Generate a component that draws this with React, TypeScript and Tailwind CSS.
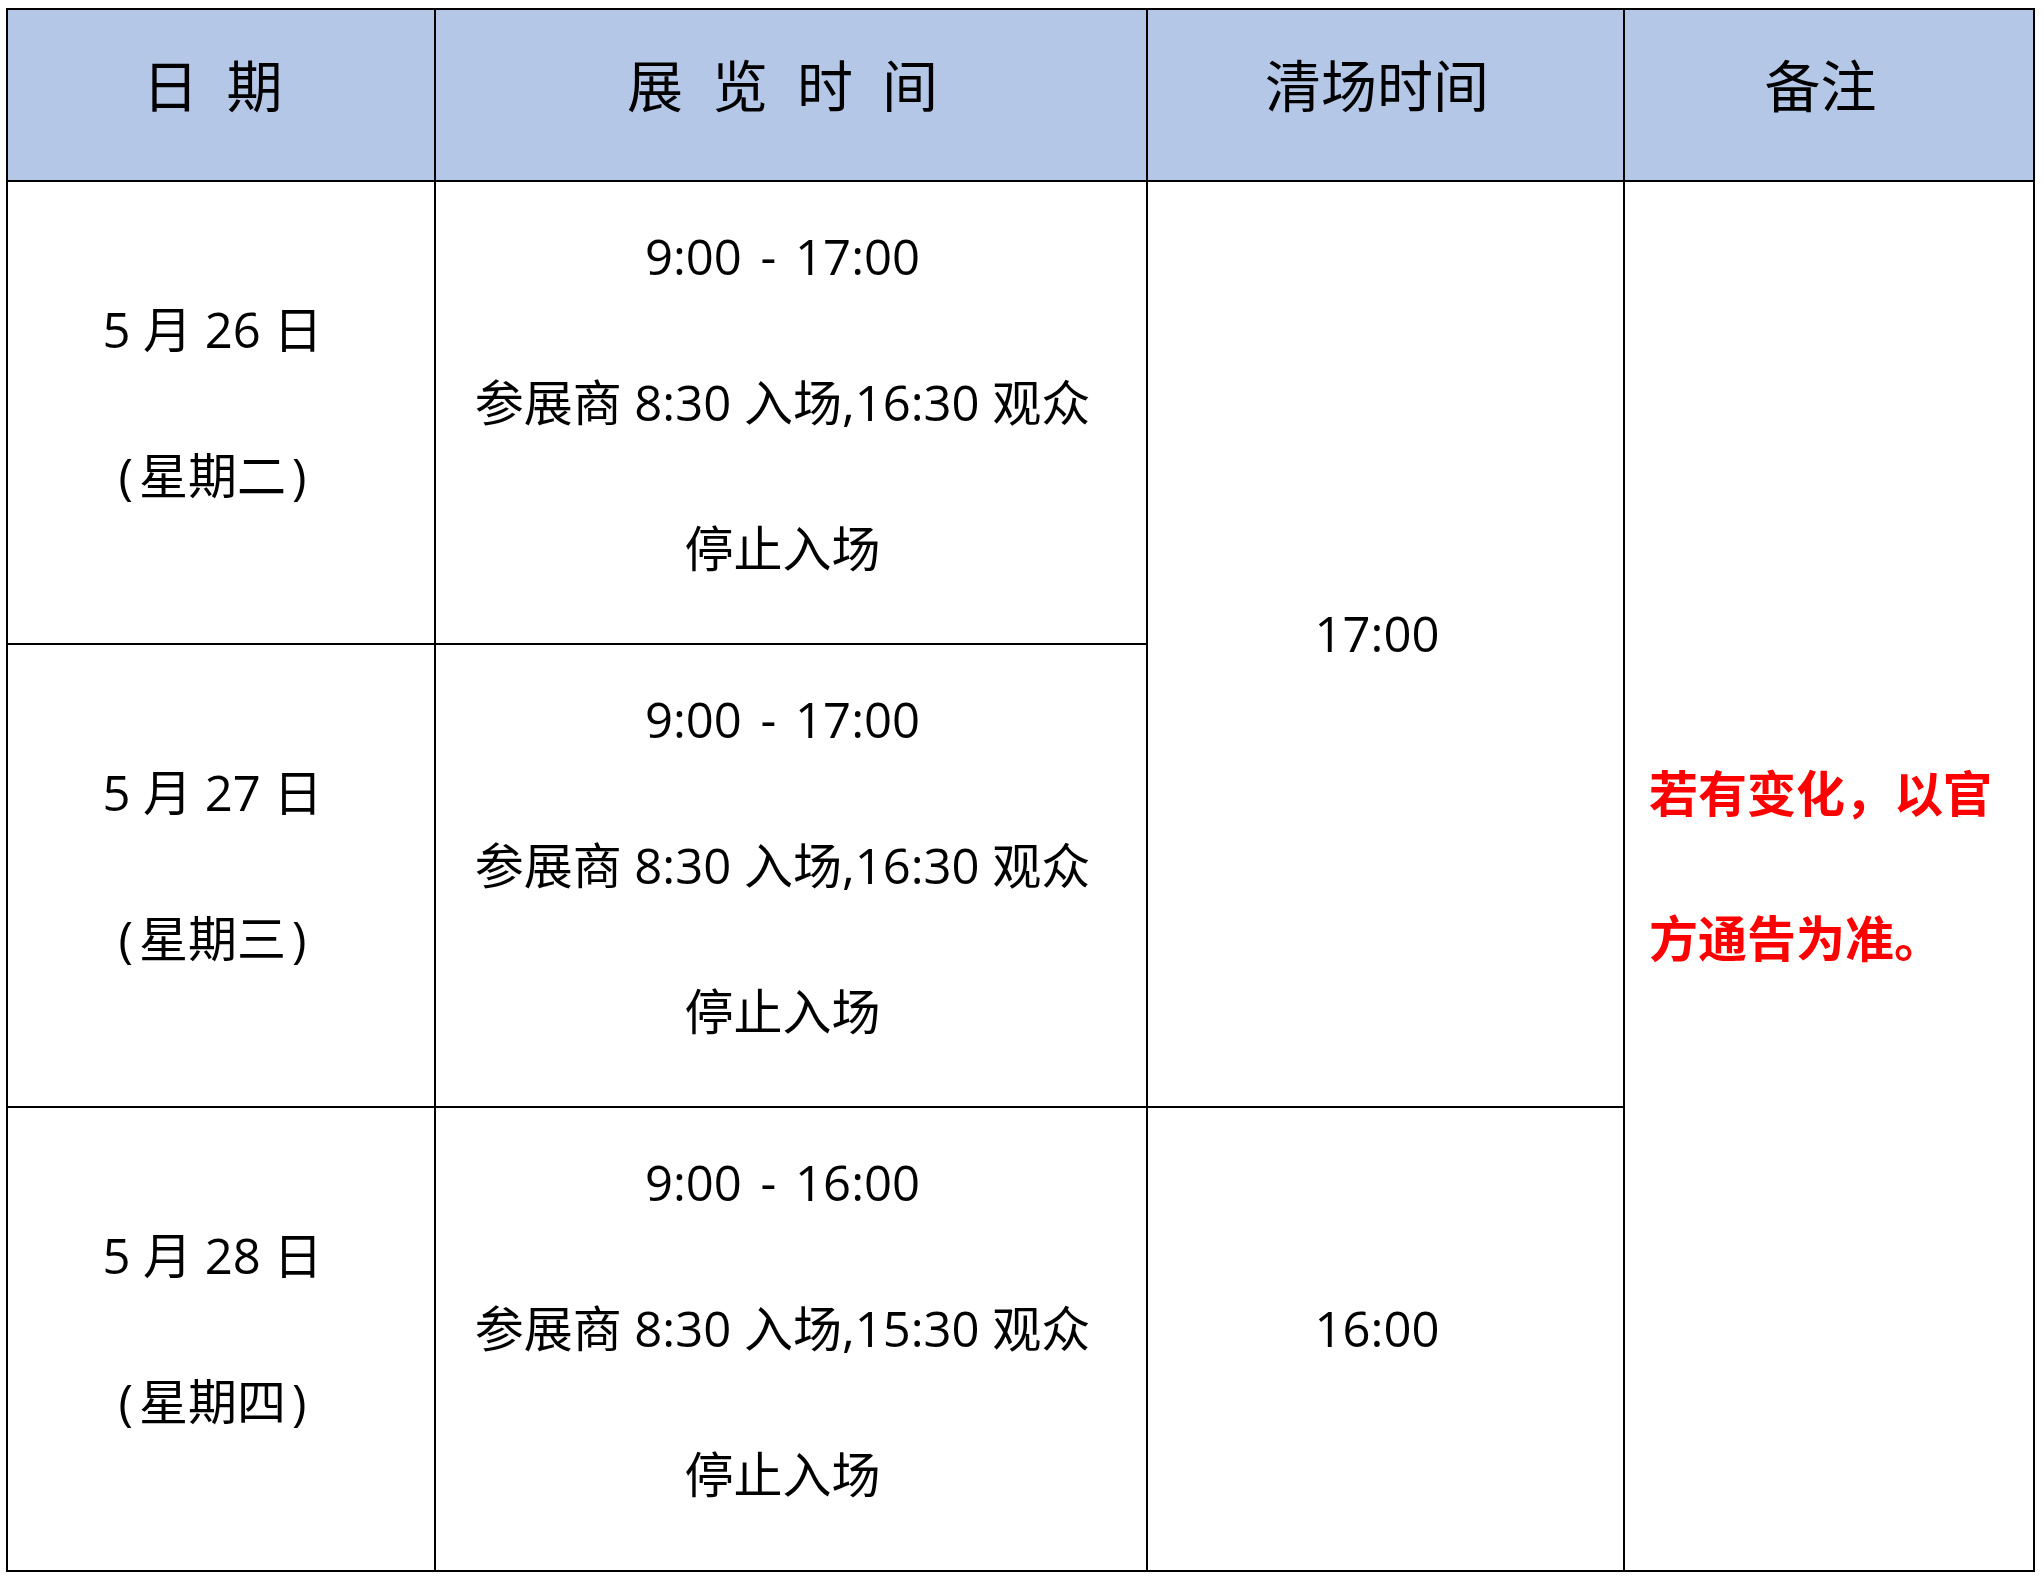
const headCell =
  "flex items-center justify-center border-r-2 border-b-2 border-black bg-[#b4c7e7] pb-[20px] pr-[17px] text-[56px] leading-none";
const bodyCell =
  "flex flex-col items-center justify-center border-r-2 border-b-2 border-black bg-white pb-[22px] pr-[17px] text-[49px] leading-[146px] whitespace-nowrap";

const days = [
  { date: "5 月 26 日", week: "星期二", time: "9:00 - 17:00", enter: "参展商 8:30 入场,16:30 观众" },
  { date: "5 月 27 日", week: "星期三", time: "9:00 - 17:00", enter: "参展商 8:30 入场,16:30 观众" },
  { date: "5 月 28 日", week: "星期四", time: "9:00 - 16:00", enter: "参展商 8:30 入场,15:30 观众" },
];

function DayCells({ day }: { day: (typeof days)[number] }) {
  return (
    <>
      <div className={bodyCell}>
        <span>{day.date}</span>
        <span>
          <span className="mr-[6px]">(</span>
          {day.week}
          <span className="ml-[6px]">)</span>
        </span>
      </div>
      <div className={bodyCell}>
        <span className="[word-spacing:6px]">{day.time}</span>
        <span>{day.enter}</span>
        <span>停止入场</span>
      </div>
    </>
  );
}

export default function App() {
  return (
    <div className="min-h-[1577px] w-[2044px] bg-white pt-[8px] pl-[6px] font-['Open_Sans','Noto_Sans_CJK_SC',sans-serif] text-black">
      <div className="grid w-max grid-cols-[428px_712px_477px_410px] grid-rows-[172px_463px_463px_464px] border-t-2 border-l-2 border-black">
        {/* header */}
        <div className={headCell}>
          <span className="flex gap-[28px]">
            <span>日</span>
            <span>期</span>
          </span>
        </div>
        <div className={headCell}>
          <span className="flex gap-[29px]">
            <span>展</span>
            <span>览</span>
            <span>时</span>
            <span>间</span>
          </span>
        </div>
        <div className={headCell}>清场时间</div>
        <div className={headCell}>备注</div>

        {/* 5/26 */}
        <DayCells day={days[0]} />
        <div className={`${bodyCell} row-span-2`}>
          <span>17:00</span>
        </div>
        <div className="row-span-3 flex flex-col items-start justify-center border-r-2 border-b-2 border-black bg-white pb-[20px] pl-[24px] text-[49px] font-bold leading-[145px] text-[#ff0000] whitespace-nowrap">
          <span>若有变化，以官</span>
          <span>方通告为准。</span>
        </div>

        {/* 5/27 */}
        <DayCells day={days[1]} />

        {/* 5/28 */}
        <DayCells day={days[2]} />
        <div className={bodyCell}>
          <span>16:00</span>
        </div>
      </div>
    </div>
  );
}
